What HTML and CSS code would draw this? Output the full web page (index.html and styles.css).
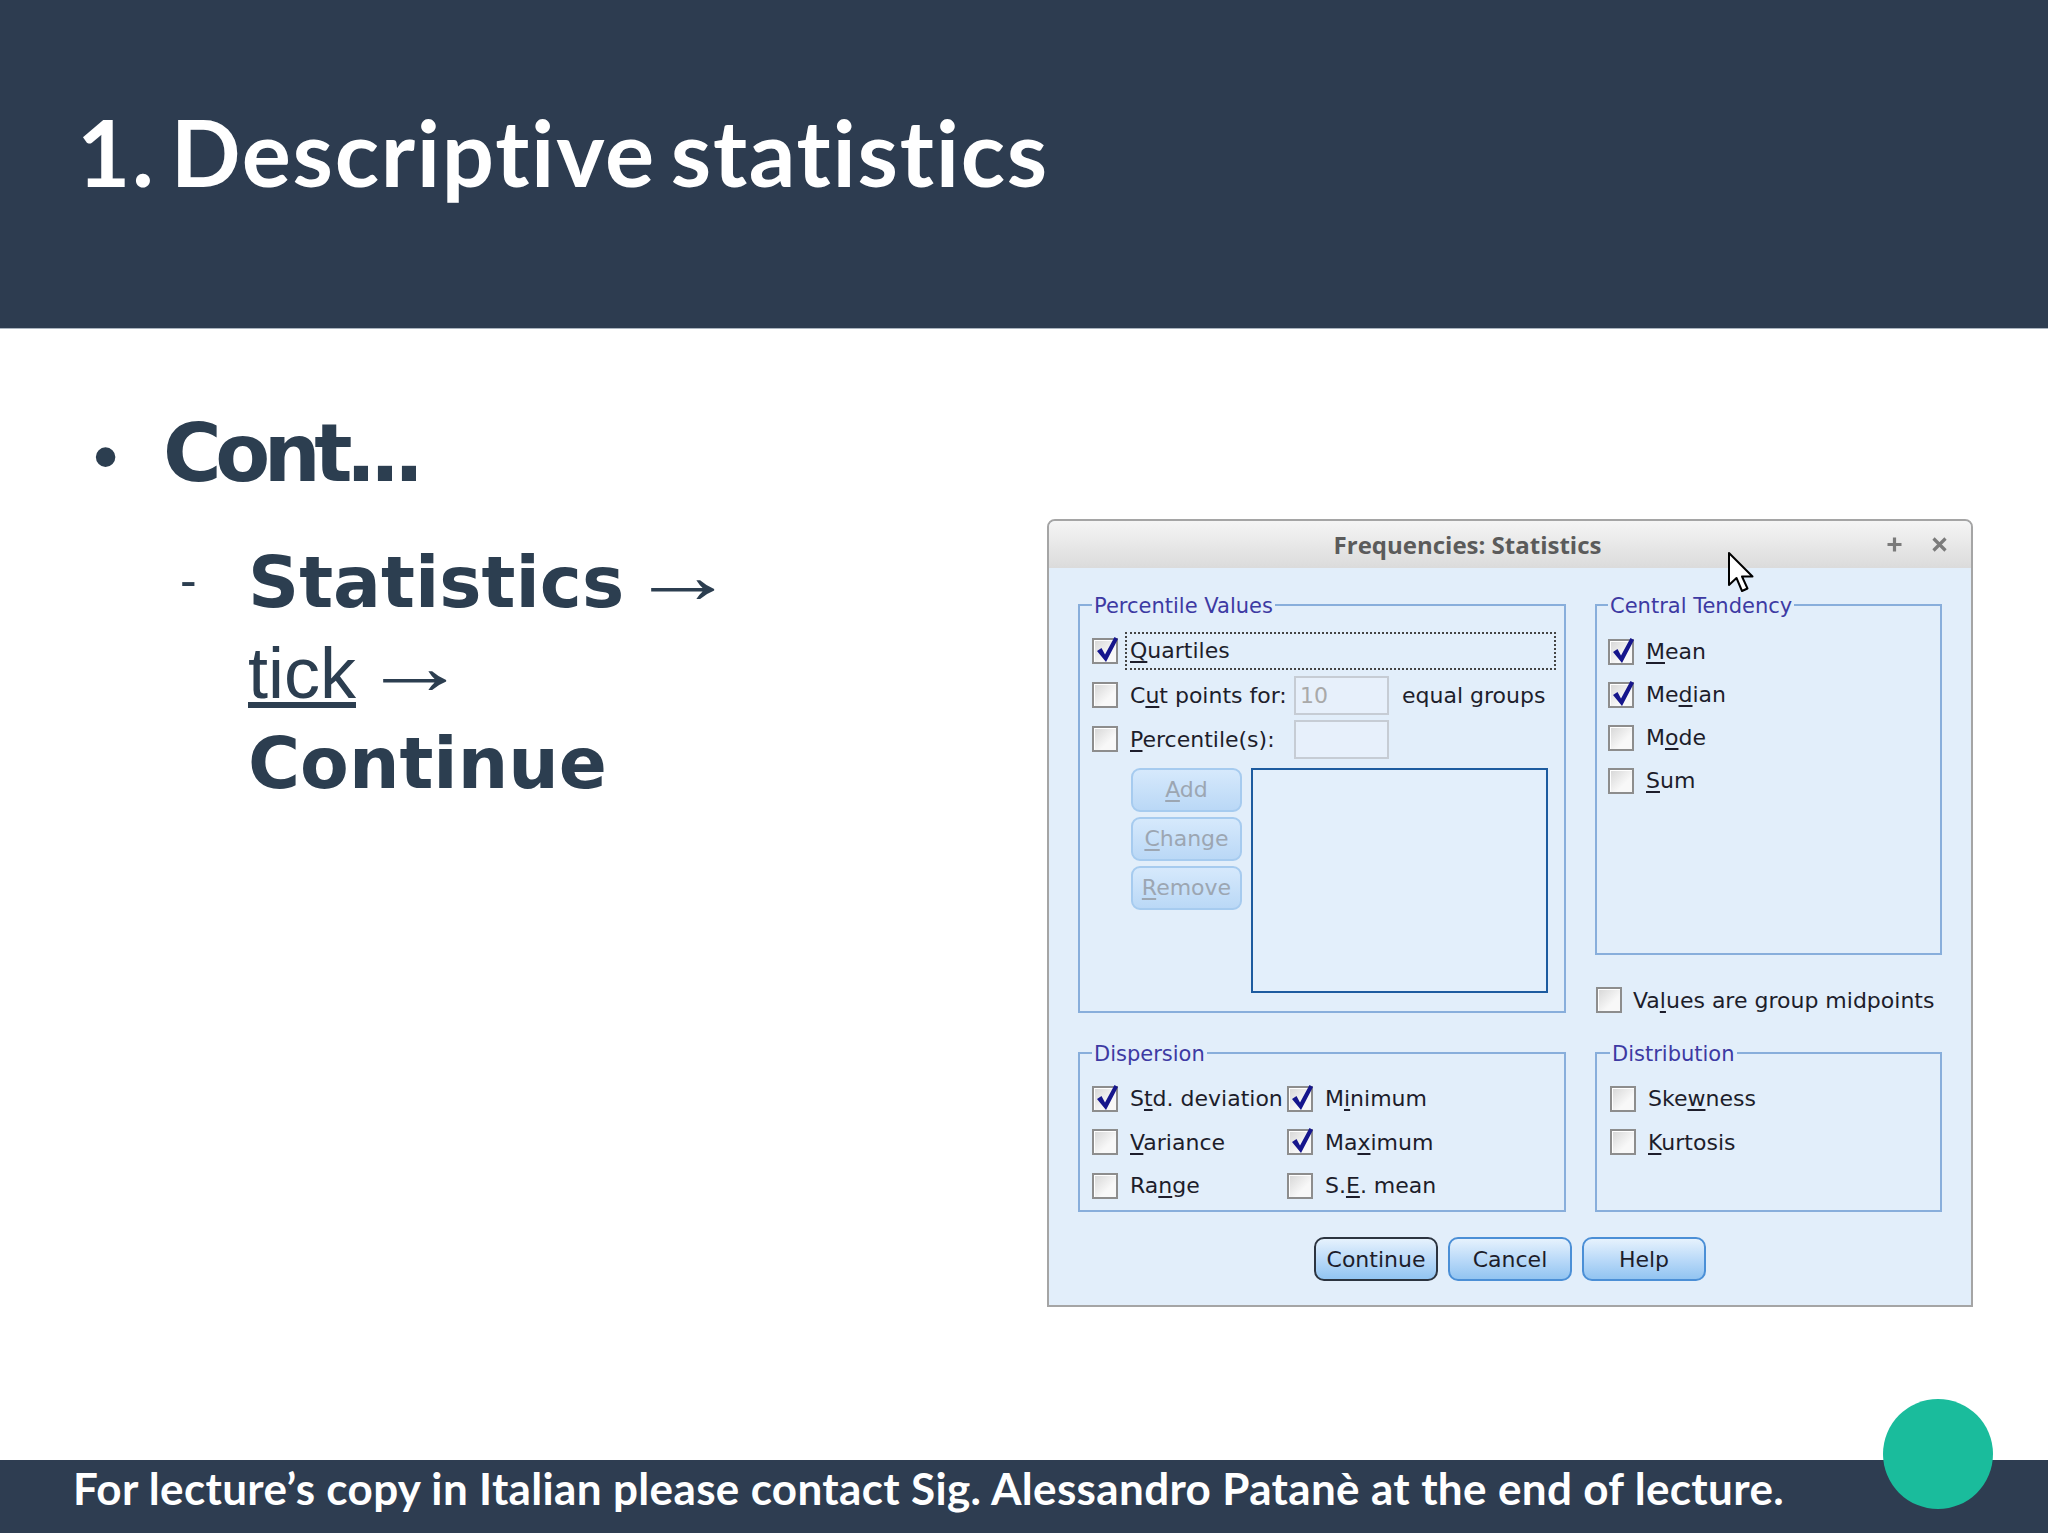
FILE: index.html
```html
<!DOCTYPE html>
<html lang="en">
<head>
<meta charset="utf-8">
<title>1. Descriptive statistics</title>
<link rel="stylesheet" href="styles.css">
</head>
<body>
<header class="slide-header">
  <h1 class="slide-title">1. Descriptive statistics</h1>
</header>
<main class="slide-body">
  <section class="bullets">
    <div class="item">
      <span class="bullet">•</span><span class="item-text">Cont...</span>
    </div>
    <div class="subitem">
      <span class="dash">-</span>
      <p class="sub-text"><strong>Statistics</strong> <span class="arrow">→</span> <span class="tick">tick</span> <span class="arrow">→</span> <strong>Continue</strong></p>
    </div>
  </section>

  <div class="dialog">
    <div class="titlebar">
      <span class="dlg-title">Frequencies: Statistics</span>
      <span class="wm">
        <svg viewBox="0 0 17 17"><path d="M8.5 1.5v14M1.5 8.5h14" stroke="#7b7b7b" stroke-width="3.2" fill="none"/></svg>
        <svg viewBox="0 0 17 17"><path d="M2.5 2.5l12 12M14.5 2.5l-12 12" stroke="#7b7b7b" stroke-width="3.2" fill="none"/></svg>
      </span>
    </div>
    <div class="dlg-body">
      <fieldset class="group pct">
        <legend>Percentile Values</legend>
        <div class="row">
          <span class="cb"><svg viewBox="0 0 24 28"><polygon points="2,15 6.5,12 10,18.5 19.5,1 23,3 11,26" fill="#16168c"/></svg></span>
          <span class="lbl focus"><u>Q</u>uartiles</span>
        </div>
        <div class="row">
          <span class="cb"></span>
          <span class="lbl fixed">C<u>u</u>t points for:</span>
          <span class="field">10</span>
          <span class="lbl after">equal groups</span>
        </div>
        <div class="row">
          <span class="cb"></span>
          <span class="lbl fixed"><u>P</u>ercentile(s):</span>
          <span class="field"></span>
        </div>
        <div class="pct-list">
          <div class="side-btns">
            <span class="btn-dis"><u>A</u>dd</span>
            <span class="btn-dis"><u>C</u>hange</span>
            <span class="btn-dis"><u>R</u>emove</span>
          </div>
          <div class="listbox"></div>
        </div>
      </fieldset>

      <div class="col-right">
        <fieldset class="group central">
          <legend>Central Tendency</legend>
          <div class="row">
            <span class="cb"><svg viewBox="0 0 24 28"><polygon points="2,15 6.5,12 10,18.5 19.5,1 23,3 11,26" fill="#16168c"/></svg></span>
            <span class="lbl"><u>M</u>ean</span>
          </div>
          <div class="row">
            <span class="cb"><svg viewBox="0 0 24 28"><polygon points="2,15 6.5,12 10,18.5 19.5,1 23,3 11,26" fill="#16168c"/></svg></span>
            <span class="lbl">Me<u>d</u>ian</span>
          </div>
          <div class="row">
            <span class="cb"></span>
            <span class="lbl">M<u>o</u>de</span>
          </div>
          <div class="row">
            <span class="cb"></span>
            <span class="lbl"><u>S</u>um</span>
          </div>
        </fieldset>
        <div class="row mid">
          <span class="cb"></span>
          <span class="lbl">Va<u>l</u>ues are group midpoints</span>
        </div>
      </div>

      <fieldset class="group disp">
        <legend>Dispersion</legend>
        <div class="disp-grid">
          <div class="row">
            <span class="cb"><svg viewBox="0 0 24 28"><polygon points="2,15 6.5,12 10,18.5 19.5,1 23,3 11,26" fill="#16168c"/></svg></span>
            <span class="lbl">S<u>t</u>d. deviation</span>
          </div>
          <div class="row">
            <span class="cb"><svg viewBox="0 0 24 28"><polygon points="2,15 6.5,12 10,18.5 19.5,1 23,3 11,26" fill="#16168c"/></svg></span>
            <span class="lbl">M<u>i</u>nimum</span>
          </div>
          <div class="row">
            <span class="cb"></span>
            <span class="lbl"><u>V</u>ariance</span>
          </div>
          <div class="row">
            <span class="cb"><svg viewBox="0 0 24 28"><polygon points="2,15 6.5,12 10,18.5 19.5,1 23,3 11,26" fill="#16168c"/></svg></span>
            <span class="lbl">Ma<u>x</u>imum</span>
          </div>
          <div class="row">
            <span class="cb"></span>
            <span class="lbl">Ra<u>n</u>ge</span>
          </div>
          <div class="row">
            <span class="cb"></span>
            <span class="lbl">S.<u>E</u>. mean</span>
          </div>
        </div>
      </fieldset>

      <fieldset class="group dist">
        <legend>Distribution</legend>
        <div class="row">
          <span class="cb"></span>
          <span class="lbl">Ske<u>w</u>ness</span>
        </div>
        <div class="row">
          <span class="cb"></span>
          <span class="lbl"><u>K</u>urtosis</span>
        </div>
      </fieldset>

      <div class="dlg-buttons">
        <button class="btn default">Continue</button>
        <button class="btn">Cancel</button>
        <button class="btn">Help</button>
      </div>
    </div>
    <svg class="cursor" width="30" height="44" viewBox="0 0 30 44"><path d="M2 2 V34 L9.5 27 L15 40 L20.5 37.5 L15 25.5 H25.5 Z" fill="#fff" stroke="#000" stroke-width="2" stroke-linejoin="round"/></svg>
  </div>
</main>
<footer class="slide-footer">
  <p>For lecture’s copy in Italian please contact Sig. Alessandro Patanè at the end of lecture.</p>
</footer>
<div class="badge"></div>
</body>
</html>
```

FILE: styles.css
```css
body {
  margin: 0;
  width: 2048px;
  height: 1534px;
  overflow: hidden;
  position: relative;
  background: #ffffff;
  font-family: "Liberation Sans", Arial, sans-serif;
}

/* ---------- header ---------- */
.slide-header {
  height: 329px;
  box-sizing: border-box;
  padding: 97px 0 0 77px;
  background: #2d3c50;
  border-bottom: 1px solid #aab4bf;
}
.slide-title {
  margin: 0;
  font-family: Lato, "Open Sans", sans-serif;
  font-weight: 700;
  font-size: 92px;
  line-height: 1.2;
  letter-spacing: 1.7px;
  word-spacing: -9px;
  color: #ffffff;
}

/* ---------- body ---------- */
.slide-body {
  display: flex;
  height: 1131px;
}
.bullets {
  flex: none;
  width: 1047px;
  box-sizing: border-box;
  padding-top: 77px;
  color: #2c3e50;
}
.item {
  display: flex;
  align-items: baseline;
}
.bullet {
  width: 70px;
  margin-left: 93px;
  font-family: "Liberation Sans", Arial, sans-serif;
  font-size: 72px;
  line-height: 1;
}
.item-text {
  font-family: "DejaVu Sans", Verdana, sans-serif;
  font-weight: 700;
  font-size: 80px;
  line-height: 96px;
  letter-spacing: -6.5px;
}
.subitem {
  display: flex;
  align-items: flex-start;
  margin-top: 36px;
  margin-left: 180px;
}
.dash {
  flex: none;
  width: 68px;
  margin-top: 17px;
  font-family: "Liberation Sans", Arial, sans-serif;
  font-size: 50px;
  line-height: 50px;
}
.sub-text {
  margin: 0;
  width: 540px;
  font-family: "DejaVu Sans", Verdana, sans-serif;
  font-weight: 700;
  font-size: 71px;
  line-height: 90px;
}
.sub-text .arrow {
  display: inline-block;
  margin-left: -6px;
  font-family: "Liberation Serif", "Times New Roman", serif;
  font-weight: 400;
  font-size: 80px;
  line-height: 0.9;
  vertical-align: 4px;
  transform: scaleX(1.33);
}
.sub-text .tick {
  font-family: "Liberation Sans", Arial, sans-serif;
  font-weight: 400;
  font-size: 72px;
  text-decoration: underline;
  text-decoration-thickness: 6px;
  text-underline-offset: 4px;
}

/* ---------- dialog ---------- */
.dialog {
  flex: none;
  position: relative;
  display: flex;
  flex-direction: column;
  width: 926px;
  height: 788px;
  margin-top: 190px;
  box-sizing: border-box;
  border: 2px solid #a5a5a5;
  border-radius: 8px 8px 0 0;
  background: #e2eefa;
  font-family: "DejaVu Sans", Verdana, sans-serif;
  font-size: 22px;
  color: #1d1d2b;
}
.titlebar {
  flex: none;
  display: flex;
  align-items: center;
  height: 47px;
  padding-right: 23px;
  border-radius: 6px 6px 0 0;
  background: linear-gradient(#f5f5f5, #dbdbdb);
}
.dlg-title {
  flex: 1;
  text-align: center;
  font-family: "Open Sans", sans-serif;
  font-weight: 700;
  font-size: 24px;
  line-height: 47px;
  color: #5b5b5b;
}
.wm {
  display: flex;
  gap: 28px;
}
.wm svg {
  display: block;
  width: 17px;
  height: 17px;
}
.dlg-body {
  flex: 1;
  display: grid;
  grid-template-columns: 488px 347px;
  column-gap: 29px;
  row-gap: 26px;
  align-content: start;
  align-items: start;
  padding: 23px 29px 0;
}
.group {
  margin: 0;
  min-width: 0;
  box-sizing: border-box;
  border: 2px solid #88aedb;
  padding: 0 8px 0 12px;
}
.group legend {
  padding: 2px 2px 0;
  font-size: 21px;
  line-height: 26px;
  color: #3d3aa3;
}
.pct {
  height: 422px;
  padding-top: 10px;
}
.central {
  height: 364px;
  padding-top: 11px;
  padding-left: 11px;
}
.disp,
.dist {
  height: 173px;
  padding-top: 10px;
}
.dist {
  padding-left: 13px;
}
.row {
  display: flex;
  align-items: center;
  height: 44px;
}
.central .row {
  height: 43px;
}
.disp .row,
.dist .row {
  height: 43.5px;
}
.cb {
  position: relative;
  flex: none;
  width: 26px;
  height: 26px;
  box-sizing: border-box;
  border: 2px solid #8d8d8d;
  background: linear-gradient(135deg, #d6d6d6, #f8f8f8 65%);
  box-shadow: inset 1px 1px 0 #ffffff;
}
.cb svg {
  position: absolute;
  left: 1px;
  top: -4px;
  width: 24px;
  height: 28px;
  overflow: visible;
}
.lbl {
  margin-left: 12px;
  white-space: nowrap;
}
.lbl u {
  text-decoration-thickness: 2px;
  text-underline-offset: 3px;
}
.focus {
  flex: 1;
  height: 38px;
  margin-left: 7px;
  padding-left: 3px;
  box-sizing: border-box;
  border: 2px dotted #444444;
  line-height: 34px;
}
.fixed {
  width: 164px;
}
.field {
  flex: none;
  width: 95px;
  height: 39px;
  box-sizing: border-box;
  padding-left: 4px;
  border: 2px solid #c6ccd4;
  background: #e7f0fb;
  color: #a9a9a9;
  line-height: 35px;
}
.after {
  margin-left: 13px;
}
.pct-list {
  display: flex;
  margin-top: 7px;
}
.side-btns {
  display: flex;
  flex-direction: column;
  gap: 5px;
  width: 111px;
  margin-left: 39px;
}
.btn-dis {
  height: 44px;
  box-sizing: border-box;
  border: 2px solid #a6cbef;
  border-radius: 9px;
  background: linear-gradient(#d6e9fc, #bad8f6);
  color: #9ca6b2;
  text-align: center;
  line-height: 40px;
}
.btn-dis u {
  text-decoration-thickness: 2px;
  text-underline-offset: 3px;
}
.listbox {
  width: 297px;
  height: 225px;
  margin-left: 9px;
  box-sizing: border-box;
  border: 2px solid #1d5b9f;
  background: #e3effb;
}
.col-right {
  display: flex;
  flex-direction: column;
}
.mid {
  height: 26px;
  margin-top: 32px;
  margin-left: 1px;
}
.mid .lbl {
  margin-left: 11px;
}
.disp-grid {
  display: grid;
  grid-template-columns: 195px 1fr;
}
.dlg-buttons {
  grid-column: 1 / -1;
  display: flex;
  justify-content: center;
  gap: 10px;
  margin-top: -1px;
}
.btn {
  width: 124px;
  height: 44px;
  padding: 0;
  box-sizing: border-box;
  border: 2px solid #4b8fd6;
  border-radius: 10px;
  background: linear-gradient(#e6f2fd, #b7d8f8 55%, #92c4f1);
  font-family: "DejaVu Sans", Verdana, sans-serif;
  font-size: 22px;
  color: #1d1d2b;
}
.btn.default {
  border-color: #2c3440;
}
.cursor {
  position: absolute;
  left: 678px;
  top: 30px;
}

/* ---------- footer ---------- */
.slide-footer {
  height: 73px;
  box-sizing: border-box;
  padding-left: 73px;
  background: #2e3d51;
}
.slide-footer p {
  margin: 0;
  font-family: Lato, "Open Sans", sans-serif;
  font-weight: 700;
  font-size: 44px;
  line-height: 56px;
  letter-spacing: 0.35px;
  white-space: nowrap;
  color: #ffffff;
}
.badge {
  position: absolute;
  left: 1883px;
  top: 1399px;
  width: 110px;
  height: 110px;
  border-radius: 50%;
  background: #1abc9c;
}
```
